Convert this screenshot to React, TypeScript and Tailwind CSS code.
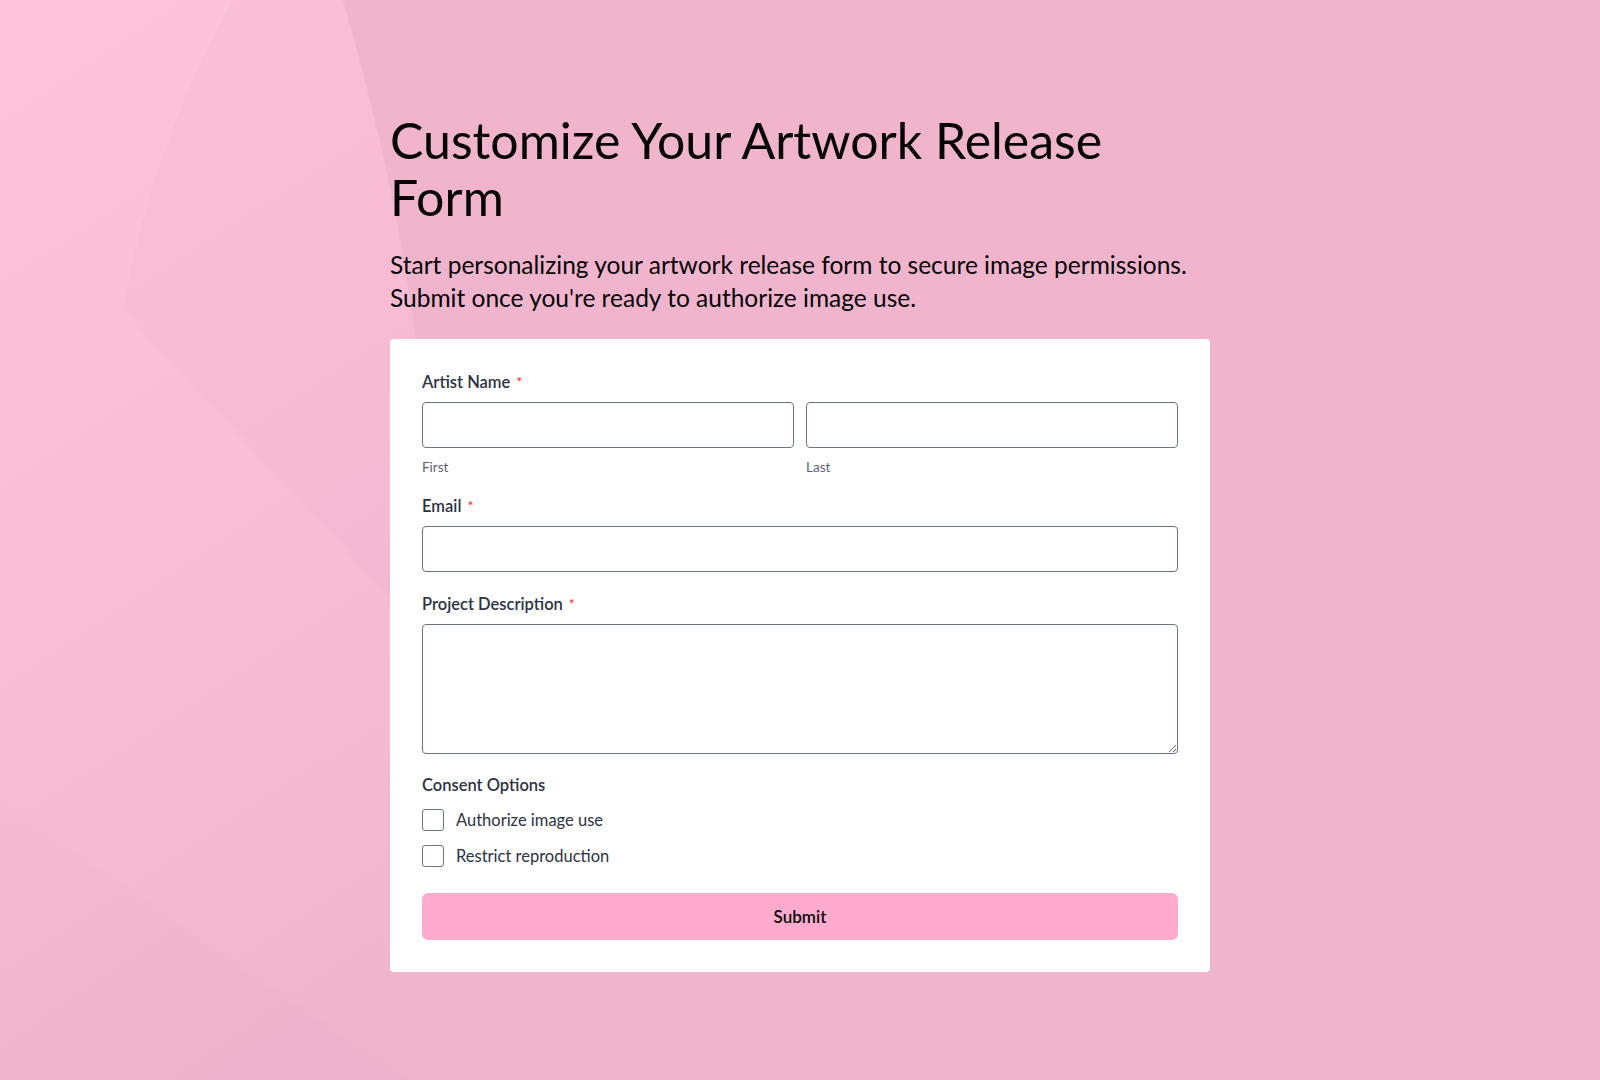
import React from 'react';

// background petals, drawn once behind the form
function Backdrop() {
  return (
    <svg
      className="absolute inset-0 h-full w-full"
      viewBox="0 0 1600 1080"
      preserveAspectRatio="none"
      aria-hidden="true"
    >
      <defs>
        <linearGradient id="petal" gradientUnits="userSpaceOnUse" x1="0" y1="0" x2="600" y2="900">
          <stop offset="0" stopColor="#ffc5dd" />
          <stop offset="0.5" stopColor="#f9bdd6" />
          <stop offset="1" stopColor="#f0b4cd" />
        </linearGradient>
      </defs>
      <rect width="1600" height="1080" fill="#f0b4cd" />
      <path d="M0 0 L343 0 C400 200 440 400 425 640 L470 1080 L0 1080 Z" fill="url(#petal)" />
      <path d="M233 0 Q150 150 123 310 L430 640 C440 400 400 200 343 0 Z" fill="#e8a9c3" opacity="0.14" />
      <path d="M0 803 L600 1211 L0 1211 Z" fill="#e8a9c3" opacity="0.1" />
    </svg>
  );
}

function Label({ text, required }: { text: string; required?: boolean }) {
  return (
    <div className="mb-[10px] flex items-center text-[16.5px] font-semibold leading-[20px] text-[#2c3345]">
      {text}
      {required && <span className="ml-[6px] text-[14px] text-[#f23a3c]">*</span>}
    </div>
  );
}

const inputCls =
  'block h-[46px] w-full rounded-[4px] border border-[#6b7283] bg-white px-3 text-[15px] text-[#2c3345] outline-none';

export default function App() {
  return (
    <div className="relative min-h-screen w-full overflow-hidden font-['Lato','Noto_Sans',sans-serif]">
      <Backdrop />
      <div className="relative mx-auto w-[820px] pb-[108px] pt-[112px]">
        <h1 className="max-w-[760px] text-[50px] font-normal leading-[57px] text-[#050505]">
          Customize Your Artwork Release Form
        </h1>
        <p className="mt-[22px] whitespace-nowrap text-[24.5px] leading-[33px] text-[#050505]">
          Start personalizing your artwork release form to secure image permissions.
          <br />
          Submit once you're ready to authorize image use.
        </p>

        <form className="mt-[25px] rounded-[4px] bg-white px-8 pb-8 pt-[33px]" onSubmit={(e) => e.preventDefault()}>
          <Label text="Artist Name" required />
          <div className="flex gap-3">
            <div className="flex-1">
              <input className={inputCls} />
              <div className="mt-[11px] text-[13.5px] leading-[16px] text-[#5d6478]">First</div>
            </div>
            <div className="flex-1">
              <input className={inputCls} />
              <div className="mt-[11px] text-[13.5px] leading-[16px] text-[#5d6478]">Last</div>
            </div>
          </div>

          <div className="mt-[21px]">
            <Label text="Email" required />
            <input className={inputCls} type="email" />
          </div>

          <div className="mt-[22px]">
            <Label text="Project Description" required />
            <textarea className="block h-[130px] w-full rounded-[4px] border border-[#6b7283] bg-white px-3 py-2 text-[15px] text-[#2c3345] outline-none" />
          </div>

          <div className="mt-[21px]">
            <div className="text-[16.5px] font-semibold leading-[20px] text-[#2c3345]">Consent Options</div>
            <div className="mt-[14px] flex flex-col gap-[14px]">
              {['Authorize image use', 'Restrict reproduction'].map((opt) => (
                <label key={opt} className="flex items-center gap-[12px] text-[16.5px] leading-[22px] text-[#2c3345]">
                  <input
                    type="checkbox"
                    className="h-[22px] w-[22px] shrink-0 appearance-none rounded-[3px] border border-[#6b7283] bg-white"
                  />
                  {opt}
                </label>
              ))}
            </div>
          </div>

          <button
            type="submit"
            className="mt-[26px] block h-[47px] w-full rounded-[6px] bg-[#feabcd] text-[17px] font-semibold text-[#0a0a0a]"
          >
            Submit
          </button>
        </form>
      </div>
    </div>
  );
}
